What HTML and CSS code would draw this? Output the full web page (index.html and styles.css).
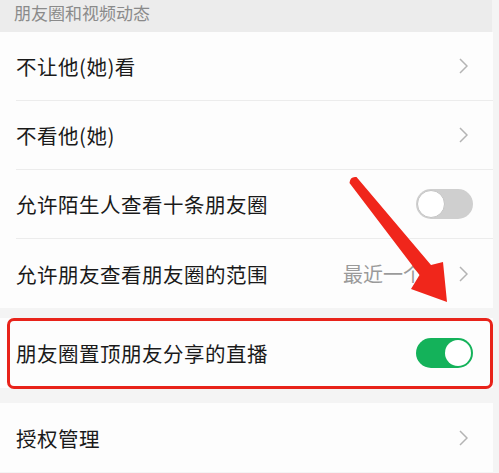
FILE: index.html
```html
<!DOCTYPE html>
<html lang="zh">
<head>
<meta charset="utf-8">
<link rel="stylesheet" href="styles.css">
</head>
<body>
<div class="page">
  <div class="section-title">朋友圈和视频动态</div>
  <div class="group">
    <div class="row"><span class="label">不让他(她)看</span><svg class="chev" viewBox="0 0 9 16"><polyline points="1,1 8,8 1,15"/></svg></div>
    <div class="row"><span class="label">不看他(她)</span><svg class="chev" viewBox="0 0 9 16"><polyline points="1,1 8,8 1,15"/></svg></div>
    <div class="row"><span class="label">允许陌生人查看十条朋友圈</span><span class="switch"><span class="knob"></span></span></div>
    <div class="row last"><span class="label">允许朋友查看朋友圈的范围</span><span class="value">最近一个月</span><svg class="chev" viewBox="0 0 9 16"><polyline points="1,1 8,8 1,15"/></svg></div>
  </div>
  <div class="group highlight">
    <div class="row last"><span class="label">朋友圈置顶朋友分享的直播</span><span class="switch on"><span class="knob"></span></span></div>
    <div class="mark"></div>
  </div>
  <div class="group">
    <div class="row last"><span class="label">授权管理</span><svg class="chev" viewBox="0 0 9 16"><polyline points="1,1 8,8 1,15"/></svg></div>
  </div>
  <svg class="arrow" width="499" height="473" viewBox="0 0 499 473">
    <path d="M349.5 183 Q350 176 356.5 177 L431 265 L443 262 L447 302 L411 289 L419.5 275 Z" fill="#f0261b"/>
  </svg>
</div>
</body>
</html>
```
FILE: styles.css
```css
html, body {
  margin: 0;
  padding: 0;
  background: #f4f4f4;
  font-family: "Noto Sans CJK SC", "Noto Sans", sans-serif;
}
.page {
  position: relative;
  width: 499px;
  height: 473px;
  overflow: hidden;
}
.section-title {
  width: 492px;
  height: 32px;
  background: #ececec;
  color: #8a8a8a;
  font-size: 17px;
  line-height: 26px;
  padding-left: 14px;
  box-sizing: border-box;
}
.group {
  width: 493px;
  background: #fdfdfd;
  position: relative;
}
.group + .group {
  margin-top: 10px;
}
.group.highlight + .group {
  margin-top: 15px;
}
.row {
  height: 69px;
  display: flex;
  align-items: center;
  margin-left: 16px;
  padding-right: 22px;
  border-bottom: 1px solid #ececec;
  box-sizing: border-box;
}
.row.last {
  border-bottom: none;
}
.group.highlight .row {
  height: 70px;
}
.label {
  flex: 1;
  font-size: 20.5px;
  color: #1a1a1a;
  letter-spacing: 0.5px;
}
.value {
  font-size: 20px;
  color: #9a9a9a;
  margin-right: 16px;
}
.chev {
  width: 9px;
  height: 16px;
  margin-right: 3px;
  fill: none;
  stroke: #b4b4b4;
  stroke-width: 1.5;
}
.switch {
  position: relative;
  width: 57px;
  height: 30px;
  border-radius: 15px;
  background: #cfcfcf;
  box-sizing: border-box;
  margin-right: -2px;
}
.switch .knob {
  position: absolute;
  left: 1px;
  top: 1px;
  width: 28px;
  height: 28px;
  border-radius: 50%;
  background: #fff;
  box-sizing: border-box;
  border: 1px solid #c4c4c4;
}
.switch.on {
  background: #14b25a;
}
.switch.on .knob {
  left: auto;
  right: 2px;
  top: 2px;
  width: 26px;
  height: 26px;
  border: none;
}
.mark {
  position: absolute;
  left: 7px;
  top: 0;
  width: 486px;
  height: 71px;
  border: 3px solid #e8231a;
  border-radius: 7px;
  box-sizing: border-box;
}
.arrow {
  position: absolute;
  left: 0;
  top: 0;
  pointer-events: none;
}
```
